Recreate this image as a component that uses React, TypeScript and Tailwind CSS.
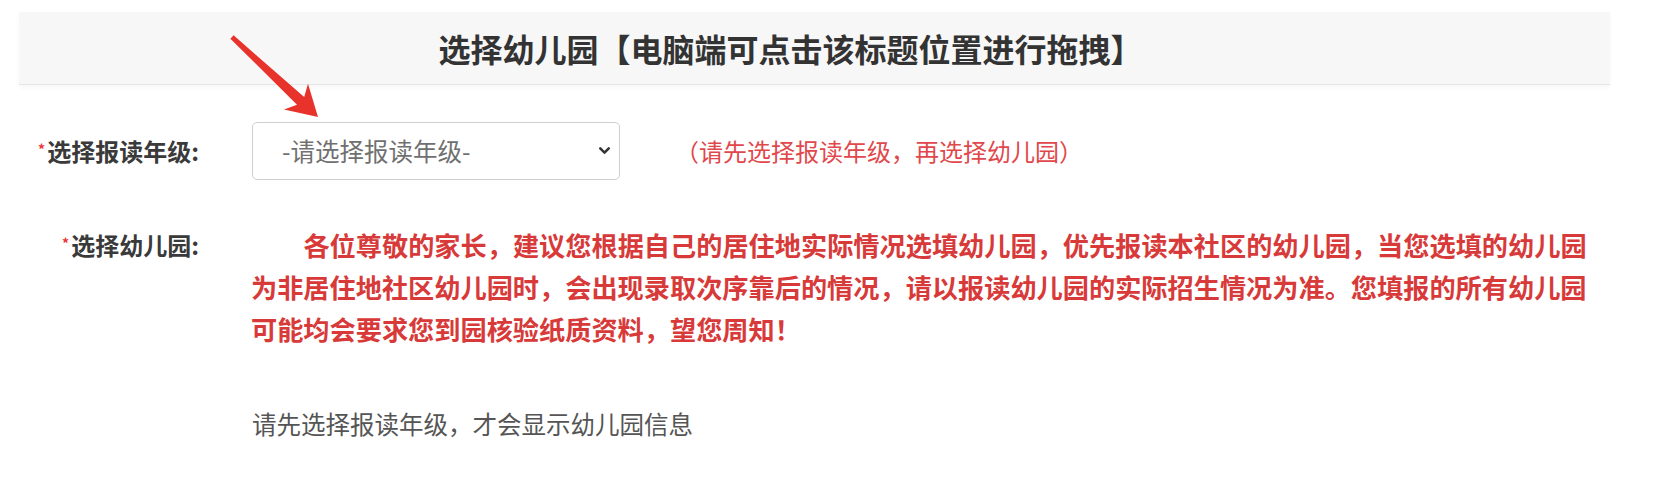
import { ChevronDown } from 'lucide-react'

const labelCls = 'w-[199px] shrink-0 text-right text-[24px] font-bold text-[#3a3a3a]'

function Star() {
  return <span className="relative -top-[6px] mr-[2px] align-baseline text-[14px] leading-none text-[#e33]">*</span>
}

export default function App() {
  return (
    <div className="relative h-[482px] w-[1658px] overflow-hidden bg-white pt-[12px] font-['Noto_Sans_CJK_SC','Noto_Sans',sans-serif]">
      <div className="ml-[19px] flex h-[73px] w-[1591px] items-center justify-center border-b border-[#e6e6e6] bg-[#f7f7f7] pr-[48px] shadow-[0_3px_5px_rgba(0,0,0,0.03)]">
        <h2 className="text-[32px] font-bold leading-none text-[#333]">选择幼儿园【电脑端可点击该标题位置进行拖拽】</h2>
      </div>

      <div className="mt-[37px] flex h-[58px] items-center">
        <label className={labelCls}>
          <Star />
          选择报读年级:
        </label>
        <div className="relative ml-[53px]">
          <select className="h-[58px] w-[368px] appearance-none rounded-[5px] border border-[#cfcfcf] bg-white pl-[29px] text-[24.5px] text-[#707070] outline-none">
            <option>-请选择报读年级-</option>
          </select>
          <ChevronDown className="pointer-events-none absolute right-[7px] top-[20px] size-[17px] text-[#333]" strokeWidth={3.5} />
        </div>
        <span className="ml-[55px] text-[24px] text-[#e0484c]">（请先选择报读年级，再选择幼儿园）</span>
      </div>

      <div className="mt-[44px] flex items-start">
        <label className={`${labelCls} leading-[42px]`}>
          <Star />
          选择幼儿园:
        </label>
        <p className="ml-[52px] w-[1340px] indent-[2em] text-[26.2px] font-bold leading-[42px] text-[#d83a3a]">
          各位尊敬的家长，建议您根据自己的居住地实际情况选填幼儿园，优先报读本社区的幼儿园，当您选填的幼儿园为非居住地社区幼儿园时，会出现录取次序靠后的情况，请以报读幼儿园的实际招生情况为准。您填报的所有幼儿园可能均会要求您到园核验纸质资料，望您周知！
        </p>
      </div>

      <p className="ml-[252px] mt-[56px] text-[24.5px] leading-[36px] text-[#555]">请先选择报读年级，才会显示幼儿园信息</p>

      {/* annotation arrow drawn over the form */}
      <svg className="pointer-events-none absolute left-0 top-0" width="1658" height="482">
        <polygon
          points="230.4,38.7 297,104.8 284,109.5 318,117 308,83.8 304.2,97 233.6,35.3"
          fill="#e8322c"
        />
      </svg>
    </div>
  )
}
